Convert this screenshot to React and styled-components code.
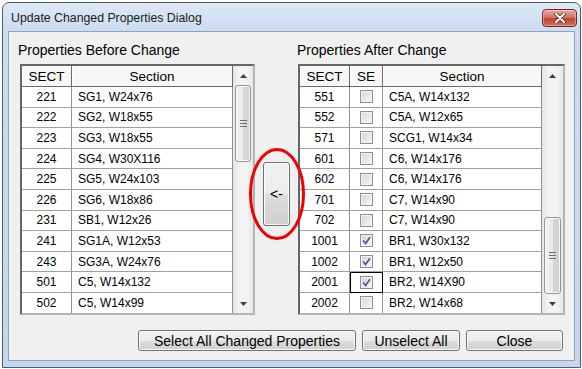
import React from "react";
import styled, { createGlobalStyle } from "styled-components";

const GlobalStyle = createGlobalStyle`
  html, body {
    margin: 0;
    padding: 0;
    background: #ffffff;
  }
  body {
    font-family: "Liberation Sans", Arial, sans-serif;
    color: #000;
  }
`;

const Window = styled.div`
  box-sizing: border-box;
  width: 579px;
  height: 366px;
  margin: 2px 0 0 2px;
  border: 1px solid #4f5a68;
  border-radius: 7px 7px 0 0;
  background: linear-gradient(#dce8f5, #cbdcef 30px, #c3d7ee);
  padding: 0 5px 6px 5px;
  display: flex;
  flex-direction: column;
`;

const TitleBar = styled.div`
  height: 28px;
  display: flex;
  align-items: center;
  justify-content: space-between;
  padding-left: 3px;
`;

const Title = styled.span`
  font-size: 12.3px;
  color: #1b1b1b;
  margin-top: 2px;
`;

const CloseButton = styled.div`
  width: 35px;
  height: 18px;
  margin-right: -2px;
  margin-top: 2px;
  box-sizing: border-box;
  border: 1px solid #6e2a22;
  border-radius: 4px;
  background: linear-gradient(#e8a99c, #d67463 45%, #c0432f 55%, #d0735e);
  box-shadow: inset 0 0 0 1px rgba(255, 255, 255, 0.35);
  display: flex;
  align-items: center;
  justify-content: center;
`;

const Client = styled.div`
  flex: 1;
  box-sizing: border-box;
  border: 1px solid #8da3bf;
  background: #f0f0f0;
  display: flex;
  flex-direction: column;
`;

const Panels = styled.div`
  display: flex;
  padding: 10px 0 0 9px;
`;

const Panel = styled.div`
  width: ${(p) => p.$width}px;
  display: flex;
  flex-direction: column;
`;

const Label = styled.div`
  font-size: 14px;
  line-height: 16px;
  height: 16px;
  margin-bottom: 6px;
`;

const Grid = styled.div`
  box-sizing: border-box;
  width: ${(p) => p.$width}px;
  height: 251px;
  margin-left: ${(p) => p.$offset}px;
  border: 2px solid;
  border-color: #666666 #b4b4b4 #b4b4b4 #666666;
  display: flex;
  background: #ffffff;
`;

const Table = styled.div`
  flex: 1;
  overflow: hidden;
  display: flex;
  flex-direction: column;
`;

const HeaderRow = styled.div`
  display: grid;
  grid-template-columns: ${(p) => p.$cols};
  height: 21px;
  flex-shrink: 0;
  background: #f7f7f7;
`;

const HeaderCell = styled.div`
  box-sizing: border-box;
  border-right: 1px solid #6c6c6c;
  border-bottom: 1px solid #6c6c6c;
  box-shadow: inset 1px 1px 0 #ffffff;
  font-size: 13.5px;
  display: flex;
  align-items: center;
  justify-content: center;
`;

const Row = styled.div`
  display: grid;
  grid-template-columns: ${(p) => p.$cols};
  height: 20.6px;
  flex-shrink: 0;
  background: #ffffff;
`;

const Cell = styled.div`
  box-sizing: border-box;
  border-right: 1px solid #939393;
  border-bottom: 1px solid #a0a0a0;
  font-size: 12px;
  display: flex;
  align-items: center;
  white-space: nowrap;
  overflow: hidden;
  justify-content: ${(p) => (p.$left ? "flex-start" : "center")};
  padding-left: ${(p) => (p.$left ? "6px" : "0")};
  ${(p) => p.$focus && "outline: 1px solid #000; outline-offset: -1px;"}
`;

const CheckBox = styled.div`
  box-sizing: border-box;
  width: 13px;
  height: 13px;
  border: 1px solid #8e8f8f;
  background: linear-gradient(135deg, #d2d5da, #f7f7f7);
  box-shadow: inset 0 0 0 1px #f4f4f4;
  display: flex;
  align-items: center;
  justify-content: center;
`;

const ScrollBar = styled.div`
  width: ${(p) => p.$width}px;
  display: flex;
  flex-direction: column;
  background: linear-gradient(to right, #e4e4e4, #f3f3f3 30%, #f3f3f3 70%, #e7e7e7);
`;

const Arrow = styled.div`
  height: 19px;
  flex-shrink: 0;
  display: flex;
  align-items: center;
  justify-content: center;
`;

const Track = styled.div`
  flex: 1;
  display: flex;
  flex-direction: column;
  align-items: center;
`;

const Thumb = styled.div`
  box-sizing: border-box;
  width: ${(p) => p.$width}px;
  height: ${(p) => p.$size}px;
  margin-top: ${(p) => p.$offset}px;
  border: 1px solid #969696;
  border-radius: 3px;
  background: linear-gradient(to right, #f3f3f3, #e9e9e9 50%, #d8d8d8 51%, #cfcfcf);
  box-shadow: inset 0 0 0 1px #fafafa;
  display: flex;
  align-items: center;
  justify-content: center;
`;

const Middle = styled.div`
  width: 41px;
  padding-top: 31px;
  display: flex;
  align-items: center;
  justify-content: center;
`;

const Highlight = styled.div`
  position: relative;
  display: flex;
`;

const Ellipse = styled.svg`
  position: absolute;
  left: 50%;
  top: 50%;
  transform: translate(-50%, -50%);
  pointer-events: none;
`;

const PushButton = styled.button`
  box-sizing: border-box;
  width: ${(p) => p.$width}px;
  height: ${(p) => p.$height || 21}px;
  padding: 0;
  border: 1px solid #707070;
  border-radius: 3px;
  background: linear-gradient(#f2f2f2, #ebebeb 50%, #dddddd 51%, #cfcfcf);
  box-shadow: inset 0 0 0 1px #fbfbfb;
  font-family: "Liberation Sans", Arial, sans-serif;
  font-size: 14px;
  color: #000;
`;

const ButtonBar = styled.div`
  display: flex;
  justify-content: flex-end;
  gap: 6px;
  padding: 15px 11px 0 0;
`;

const leftRows = [
  ["221", "SG1, W24x76"],
  ["222", "SG2, W18x55"],
  ["223", "SG3, W18x55"],
  ["224", "SG4, W30X116"],
  ["225", "SG5, W24x103"],
  ["226", "SG6, W18x86"],
  ["231", "SB1, W12x26"],
  ["241", "SG1A, W12x53"],
  ["243", "SG3A, W24x76"],
  ["501", "C5, W14x132"],
  ["502", "C5, W14x99"],
  ["", ""],
];

const rightRows = [
  { sect: "551", se: false, section: "C5A, W14x132" },
  { sect: "552", se: false, section: "C5A, W12x65" },
  { sect: "571", se: false, section: "SCG1, W14x34" },
  { sect: "601", se: false, section: "C6, W14x176" },
  { sect: "602", se: false, section: "C6, W14x176" },
  { sect: "701", se: false, section: "C7, W14x90" },
  { sect: "702", se: false, section: "C7, W14x90" },
  { sect: "1001", se: true, section: "BR1, W30x132" },
  { sect: "1002", se: true, section: "BR1, W12x50" },
  { sect: "2001", se: true, section: "BR2, W14X90", focus: true },
  { sect: "2002", se: false, section: "BR2, W14x68" },
];

const LEFT_COLS = "50px 161px";
const RIGHT_COLS = "50px 33px 159px";

function Triangle({ down }) {
  return (
    <svg width="7" height="4" viewBox="0 0 7 4">
      <polygon
        points={down ? "0,0 7,0 3.5,4" : "0,4 7,4 3.5,0"}
        fill="#3f3f3f"
      />
    </svg>
  );
}

function Grip() {
  return (
    <svg width="7" height="7" viewBox="0 0 7 7">
      <g stroke="#6f6f6f" strokeWidth="1">
        <line x1="0" y1="0.5" x2="7" y2="0.5" />
        <line x1="0" y1="3.5" x2="7" y2="3.5" />
        <line x1="0" y1="6.5" x2="7" y2="6.5" />
      </g>
    </svg>
  );
}

function VScroll({ width, offset, size }) {
  return (
    <ScrollBar $width={width}>
      <Arrow>
        <Triangle />
      </Arrow>
      <Track>
        <Thumb $width={width - 4} $offset={offset} $size={size}>
          <Grip />
        </Thumb>
      </Track>
      <Arrow>
        <Triangle down />
      </Arrow>
    </ScrollBar>
  );
}

function Check({ checked }) {
  return (
    <CheckBox>
      {checked && (
        <svg width="9" height="9" viewBox="0 0 9 9">
          <path
            d="M1.2 4.6 L3.6 7.4 L8 1.2"
            fill="none"
            stroke="#3a55a4"
            strokeWidth="1.6"
          />
        </svg>
      )}
    </CheckBox>
  );
}

export default function App() {
  return (
    <>
      <GlobalStyle />
      <Window>
        <TitleBar>
          <Title>Update Changed Properties Dialog</Title>
          <CloseButton>
            <svg width="12" height="10" viewBox="0 0 12 10">
              <path
                d="M2 1 L10 9 M10 1 L2 9"
                stroke="#5b1d16"
                strokeWidth="3.6"
                strokeLinecap="round"
              />
              <path
                d="M2 1 L10 9 M10 1 L2 9"
                stroke="#ffffff"
                strokeWidth="2.2"
                strokeLinecap="round"
              />
            </svg>
          </CloseButton>
        </TitleBar>
        <Client>
          <Panels>
            <Panel $width={238}>
              <Label>Properties Before Change</Label>
              <Grid $width={235} $offset={2}>
                <Table>
                  <HeaderRow $cols={LEFT_COLS}>
                    <HeaderCell>SECT</HeaderCell>
                    <HeaderCell>Section</HeaderCell>
                  </HeaderRow>
                  {leftRows.map(([sect, section], i) => (
                    <Row key={i} $cols={LEFT_COLS}>
                      <Cell>{sect}</Cell>
                      <Cell $left>{section}</Cell>
                    </Row>
                  ))}
                </Table>
                <VScroll width={20} offset={0} size={77} />
              </Grid>
            </Panel>
            <Middle>
              <Highlight>
                <PushButton $width={27} $height={64}>
                  &lt;-
                </PushButton>
                <Ellipse width="58" height="94" viewBox="0 0 58 94">
                  <ellipse
                    cx="29"
                    cy="47"
                    rx="26.5"
                    ry="44.5"
                    fill="none"
                    stroke="#f00000"
                    strokeWidth="3"
                  />
                </Ellipse>
              </Highlight>
            </Middle>
            <Panel $width={270}>
              <Label>Properties After Change</Label>
              <Grid $width={267} $offset={1}>
                <Table>
                  <HeaderRow $cols={RIGHT_COLS}>
                    <HeaderCell>SECT</HeaderCell>
                    <HeaderCell>SE</HeaderCell>
                    <HeaderCell>Section</HeaderCell>
                  </HeaderRow>
                  {rightRows.map((r) => (
                    <Row key={r.sect} $cols={RIGHT_COLS}>
                      <Cell>{r.sect}</Cell>
                      <Cell $focus={r.focus}>
                        <Check checked={r.se} />
                      </Cell>
                      <Cell $left>{r.section}</Cell>
                    </Row>
                  ))}
                </Table>
                <VScroll width={21} offset={132} size={77} />
              </Grid>
            </Panel>
          </Panels>
          <ButtonBar>
            <PushButton $width={218}>Select All Changed Properties</PushButton>
            <PushButton $width={98}>Unselect All</PushButton>
            <PushButton $width={97}>Close</PushButton>
          </ButtonBar>
        </Client>
      </Window>
    </>
  );
}
